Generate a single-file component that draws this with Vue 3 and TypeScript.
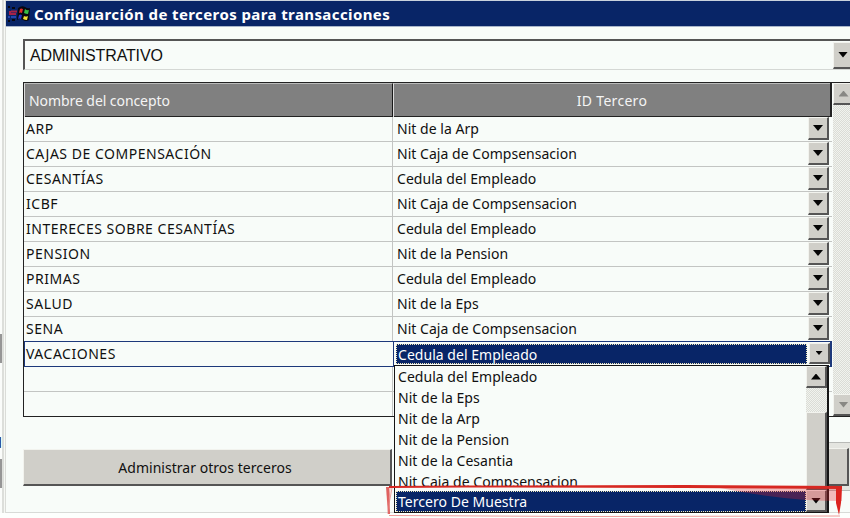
<script setup lang="ts">
interface Concept {
  name: string
  third: string
}

const concepts: Concept[] = [
  { name: 'ARP', third: 'Nit de la Arp' },
  { name: 'CAJAS DE COMPENSACIÓN', third: 'Nit Caja de Compsensacion' },
  { name: 'CESANTÍAS', third: 'Cedula del Empleado' },
  { name: 'ICBF', third: 'Nit Caja de Compsensacion' },
  { name: 'INTERECES SOBRE CESANTÍAS', third: 'Cedula del Empleado' },
  { name: 'PENSION', third: 'Nit de la Pension' },
  { name: 'PRIMAS', third: 'Cedula del Empleado' },
  { name: 'SALUD', third: 'Nit de la Eps' },
  { name: 'SENA', third: 'Nit Caja de Compsensacion' },
]

const options: string[] = [
  'Cedula del Empleado',
  'Nit de la Eps',
  'Nit de la Arp',
  'Nit de la Pension',
  'Nit de la Cesantia',
  'Nit Caja de Compsensacion',
]
</script>

<template>
  <div class="screen">
    <aside class="behind">
      <i class="stub"></i>
      <span class="letter">d</span>
      <i class="stub"></i>
    </aside>
    <main class="window">
      <header class="titlebar">
        <svg class="logo" width="24" height="18" viewBox="0 0 24 18">
          <path d="M11 3Q15 0 18 2Q21 4 23 3L22 15Q19 17 16 15Q13 13 10 15Z" fill="#080810" />
          <path d="M13 4Q14 3 16 4L15 8Q13 7 12 8Z" fill="#e12b28" />
          <path d="M18 4Q20 6 22 5L21 9Q19 9 17 8Z" fill="#35bd45" />
          <path d="M12 10Q13 9 15 10L14 14Q12 13 11 14Z" fill="#2338c8" />
          <path d="M17 11Q19 12 21 11L20 15Q18 15 16 14Z" fill="#f2df35" />
          <path d="M1 2h2M5 3h3M1 16h2M5 15h3" stroke="#080810" stroke-width="2" />
          <path d="M2 7h2M4 6.5h6M2 9h7" stroke="#a52348" stroke-width="2" />
          <path d="M1 12h2M4 12h5" stroke="#2546ad" stroke-width="2" />
        </svg>
        <span>Configuarción de terceros para transacciones</span>
      </header>
      <section class="content">
        <div class="combo">
          <span>ADMINISTRATIVO</span>
          <button class="face combo-arrow"><i class="tri"></i></button>
        </div>
        <div class="grid">
          <div class="table">
            <div class="head">
              <div class="name">Nombre del concepto</div>
              <div class="third">ID Tercero</div>
            </div>
            <div v-for="row in concepts" :key="row.name" class="row">
              <div class="name">{{ row.name }}</div>
              <div class="third"><span>{{ row.third }}</span><button class="face arrow"><i class="tri"></i></button></div>
            </div>
            <div class="row active">
              <div class="name">VACACIONES</div>
              <div class="third">
                <span class="chosen">Cedula del Empleado</span>
                <button class="face arrow"><i class="tri small"></i></button>
              </div>
            </div>
            <div class="row"><div class="name"></div><div class="third"></div></div>
            <div class="row last"><div class="name"></div><div class="third"></div></div>
          </div>
          <div class="scroll">
            <button class="face"><i class="tri up off"></i></button>
            <button class="face"><i class="tri off"></i></button>
          </div>
        </div>
        <footer>
          <button class="face action">Administrar otros terceros</button>
          <div class="frame"><button class="face"></button></div>
        </footer>
      </section>
    </main>
    <div class="menu">
      <div class="options">
        <div v-for="option in options" :key="option" class="option">{{ option }}</div>
        <div class="option chosen">Tercero De Muestra</div>
      </div>
      <div class="menu-scroll">
        <button class="face"><i class="tri up"></i></button>
        <div class="track"></div>
        <div class="face thumb"></div>
        <button class="face"><i class="tri"></i></button>
      </div>
    </div>
    <svg class="marker" width="465" height="35" viewBox="0 0 465 35">
      <path d="M335 5L457 6V18Q400 18 335 5Z" fill="#e4202b" opacity=".3" />
      <path d="M4 3L80 2.5L300 2L457 3V6L300 5L80 4.5L4 5Z" fill="#d72822" />
      <path d="M1 4H4L5 31H3Z" fill="#db4544" opacity=".85" />
      <path d="M5 5L3 31M7 5L4 21" fill="none" stroke="#e77a77" stroke-width=".7" />
      <path d="M4 32.5L200 33.5L455 33" fill="none" stroke="#ef9b98" />
      <path d="M451 5L457 4L456 20L454 32L451 20Z" fill="#dc241f" />
    </svg>
  </div>
</template>

<style>
body { margin: 0; overflow: hidden; }
</style>

<style scoped>
* { box-sizing: border-box; }
.screen { position: relative; display: flex; width: 850px; height: 518px; overflow: hidden; background: #fdfffd; color: #101010; font: 14px/20px "Noto Sans", "DejaVu Sans", sans-serif; letter-spacing: .03px; white-space: nowrap; }
.behind { width: 6px; height: 513px; flex: none; padding-top: 334px; background: linear-gradient(90deg, #fafcfa 2px, #dcdeda 2px 4px, #f6f8f4 4px 5px, #dadcd8 5px); overflow: hidden; }
.stub { display: block; width: 2px; height: 29px; background: #969696; }
.letter { display: block; width: 2px; height: 20px; margin: 70px 0 6px; direction: rtl; overflow: hidden; }
.window { width: 844px; height: 513px; flex: none; background: #f8fcf9; border-top: 1px solid #c9d2dd; border-bottom: 1px solid #d8dad7; }
.titlebar { height: 26px; display: flex; align-items: center; gap: 3px; padding-left: 1px; background: #082567; border-bottom: 1px solid #a9b6cb; color: #fff; font: 700 15px/20px "Noto Sans", sans-serif; letter-spacing: .4px; }
.logo { display: block; flex: none; }
.content { padding: 12px 0 0 17px; }
.combo { height: 31px; display: flex; justify-content: space-between; align-items: center; padding-left: 5px; border: solid #555; border-width: 2px 0 1px 2px; border-bottom-color: #d5d8d5; font: 16px/25px "Liberation Sans", Arial, sans-serif; letter-spacing: -.15px; }
.face { display: flex; align-items: center; justify-content: center; padding: 0; background: #d0cfc9; border: solid; border-width: 1px 2px 2px 1px; border-color: #f2f3ee #555 #555 #f2f3ee; font: inherit; letter-spacing: inherit; color: inherit; }
.combo-arrow { width: 21px; height: 27px; margin-right: -4px; flex: none; }
.tri { display: block; width: 10px; height: 6px; background: #050505; clip-path: polygon(0 0, 100% 0, 50% 100%); }
.tri.small { width: 7px; height: 4px; }
.tri.up { clip-path: polygon(50% 0, 100% 100%, 0 100%); }
.tri.off { background: #888884; }
.grid { height: 335px; margin-top: 12px; display: flex; border: solid #222; border-width: 1px 0 1px 1px; }
.table { width: 808px; flex: none; }
.head { height: 34px; display: grid; grid-template-columns: 369px 437px; background: #808080; border: solid #222; border-width: 0 2px 1px 0; color: #f4f4f4; line-height: 33px; letter-spacing: -.07px; }
.head div { border-top: 1px solid #b9bab9; border-left: 1px solid #dcdcdc; padding-left: 4px; }
.head .name { border-right: 1px solid #181818; }
.head .third { padding: 0; text-align: center; letter-spacing: .3px; }
.row { height: 25px; display: grid; grid-template-columns: 369px 439px; border-bottom: 1px solid #c3c5c3; line-height: 24px; }
.row .name { padding-left: 2px; border-right: 1px solid #c3c5c3; letter-spacing: .52px; }
.row .third { display: flex; justify-content: space-between; padding: 0 3px 0 4px; }
.arrow { width: 21px; height: 23px; flex: none; }
.row.active { height: 26px; margin: -1px 0 0; border: 1px solid #1d397b; border-right-width: 2px; }
.row.active .name { padding-left: 1px; border-right-color: #1d397b; }
.row.active .third { padding: 1px 3px 0 2px; }
.chosen { background: #082567; color: #fff; outline: 1px dotted #f0e8b8; outline-offset: -1px; }
.row.active .chosen { width: 411px; height: 20px; margin-top: 1px; padding-left: 2px; line-height: 21px; }
.row.active .arrow { height: 21px; margin-right: 0; }
.row.last { border-bottom: 0; height: 24px; }
.scroll { width: 22px; margin-left: 1px; display: flex; flex: none; flex-direction: column; justify-content: space-between; background: repeating-conic-gradient(#dadcd6 0 25%, #f1f3ee 0 50%) 0 0 / 2px 2px; }
.scroll .face { width: 22px; height: 22px; }
footer { display: flex; justify-content: space-between; margin-top: 25px; }
.action { width: 369px; height: 37px; margin-top: 7px; padding-right: 4px; padding-top: 2px; }
.frame { width: 24px; height: 49px; padding: 5px 0 0 2px; border: solid #b8bab7; border-width: 1px 0; background: #e4e5e0; }
.frame .face { width: 21px; height: 38px; }
.menu { position: absolute; left: 394px; top: 365px; width: 435px; height: 148px; display: flex; border: solid #151515; border-width: 1px 2px 1px 1px; background: #f8fcf9; }
.options { flex: 1; padding-left: 1px; }
.option { height: 21px; padding-left: 2px; line-height: 22px; }
.option:nth-last-child(2) { height: 16px; margin-bottom: 4px; overflow: hidden; }
.option.chosen { height: 21px; width: 410px; }
.menu-scroll { width: 21px; display: flex; flex-direction: column; }
.menu-scroll .face { width: 21px; height: 22px; flex: none; }
.track { height: 24px; background: repeating-conic-gradient(#dadcd6 0 25%, #f1f3ee 0 50%) 0 0 / 2px 2px; }
.menu-scroll .thumb { height: 78px; }
.marker { position: absolute; left: 385px; top: 483px; }
</style>
